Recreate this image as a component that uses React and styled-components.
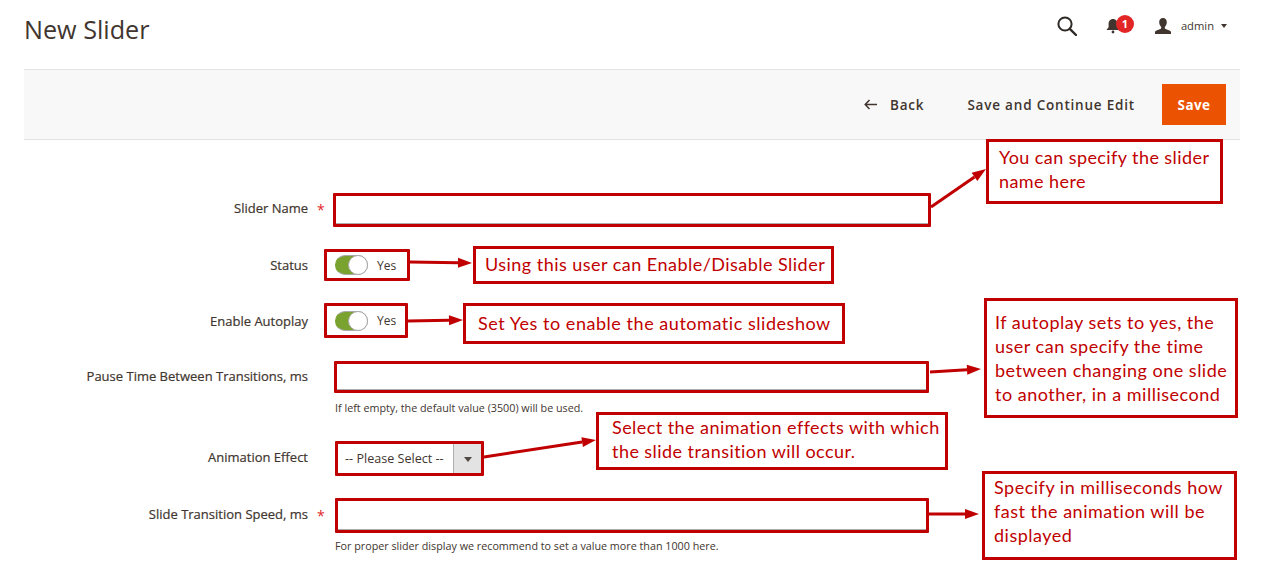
import React from "react";
import styled, { createGlobalStyle } from "styled-components";

const RED = "#c00000";

const Global = createGlobalStyle`
  html, body { margin: 0; padding: 0; background: #fff; }
  body { font-family: "Open Sans", "Liberation Sans", sans-serif; color: #41362f; }
  * { box-sizing: border-box; }
`;

const Page = styled.div`
  position: relative;
  width: 1265px;
  height: 578px;
  padding: 0 25px 0 24px;
  overflow: hidden;
`;

const Header = styled.header`
  height: 69px;
  display: flex;
  align-items: flex-start;
  justify-content: space-between;
`;

const Title = styled.h1`
  margin: 12px 0 0;
  font-size: 25.2px;
  line-height: 34px;
  font-weight: 400;
  color: #41362f;
`;

const HeaderTools = styled.div`
  display: flex;
  align-items: center;
  height: 52px;
  margin-right: 13px;
`;

const SearchButton = styled.span`
  display: flex;
  width: 20px;
  height: 20px;
  margin-right: 29px;
`;

const Bell = styled.span`
  position: relative;
  display: flex;
  width: 16px;
  height: 18px;
  margin-right: 32px;
`;

const Badge = styled.span`
  position: absolute;
  left: 10px;
  top: -2px;
  width: 18px;
  height: 18px;
  border-radius: 50%;
  background: #e22626;
  color: #fff;
  font-size: 11px;
  font-weight: 700;
  line-height: 18px;
  text-align: center;
`;

const UserName = styled.span`
  margin: 0 7px 0 9px;
  padding-bottom: 2px;
  font-size: 11.2px;
  color: #41362f;
`;

const Caret = styled.span`
  width: 0;
  height: 0;
  border-left: 3px solid transparent;
  border-right: 3px solid transparent;
  border-top: 4px solid #41362f;
`;

const ActionBar = styled.div`
  height: 71px;
  display: flex;
  align-items: center;
  justify-content: flex-end;
  padding-right: 14px;
  background: #f8f8f8;
  border-top: 1px solid #e3e3e3;
  border-bottom: 1px solid #e3e3e3;
`;

const ActionLink = styled.span`
  display: flex;
  align-items: center;
  gap: 13px;
  margin-right: ${(p) => p.$gap}px;
  font-size: 13.5px;
  font-weight: 600;
  letter-spacing: 0.8px;
  color: #41362f;
`;

const SaveButton = styled.button`
  width: 64px;
  height: 41px;
  border: 0;
  padding: 0;
  background: #eb5202;
  color: #fff;
  font-family: inherit;
  font-size: 13.5px;
  font-weight: 700;
  letter-spacing: 0.4px;
`;

const Form = styled.form`
  display: flex;
  flex-direction: column;
  padding-top: 53px;
`;

const Row = styled.div`
  display: grid;
  grid-template-columns: 284px 26px 1fr;
  align-items: center;
  margin-top: ${(p) => p.$top || 0}px;
  height: ${(p) => p.$height}px;
`;

const Label = styled.label`
  text-align: right;
  font-size: 13px;
  font-weight: 400;
  color: #41362f;
  padding-bottom: ${(p) => p.$lift || 0}px;
  -webkit-text-stroke: 0.2px #41362f;
`;

const Star = styled.span`
  color: #e22626;
  font-size: 14px;
  font-weight: 400;
  padding-left: 9px;
  line-height: 14px;
  height: 10px;
  margin-bottom: ${(p) => p.$lift || 0}px;
`;

const Control = styled.div`
  grid-column: 3;
  width: ${(p) => p.$width}px;
  height: ${(p) => p.$height}px;
  margin-left: ${(p) => p.$left}px;
  border: 3px solid ${RED};
  border-radius: 1px;
  background: #fff;
  display: flex;
  align-items: center;
`;

const Empty = styled.div`
  flex: 1;
  height: 100%;
  border-bottom: 1px solid #adadad;
`;

const Toggle = styled.span`
  position: relative;
  display: block;
  width: 33px;
  height: 20px;
  margin-left: 8px;
  border-radius: 10px;
  background: #79a22e;
  border: 1px solid #a9a9a9;
  border-left-color: #79a22e;
`;

const Knob = styled.span`
  position: absolute;
  right: -1px;
  top: -1px;
  width: 20px;
  height: 20px;
  border-radius: 50%;
  background: #fff;
  border: 1px solid #a9a9a9;
`;

const ToggleText = styled.span`
  margin-left: 9px;
  font-size: 12px;
  color: #41362f;
`;

const SelectText = styled.span`
  flex: 1;
  padding-left: 7px;
  font-size: 12.6px;
  color: #41362f;
  white-space: nowrap;
`;

const SelectArrow = styled.span`
  width: 28px;
  height: 100%;
  display: flex;
  align-items: center;
  justify-content: center;
  background: #e3e3e3;
  border-left: 1px solid #adadad;
  &::after {
    content: "";
    border-left: 4px solid transparent;
    border-right: 4px solid transparent;
    border-top: 5px solid #514943;
    margin-top: 2px;
  }
`;

const Note = styled.div`
  margin: ${(p) => p.$top}px 0 0 311px;
  font-size: 10.75px;
  line-height: 12px;
  color: #41362f;
`;

const Callout = styled.div`
  position: absolute;
  left: ${(p) => p.$x}px;
  top: ${(p) => p.$y}px;
  width: ${(p) => p.$w}px;
  height: ${(p) => p.$h}px;
  padding: ${(p) => p.$py}px 0 0 ${(p) => p.$px}px;
  border: 3px solid ${RED};
  background: #fff;
  color: ${RED};
  font-family: Lato, "Open Sans", sans-serif;
  font-size: 18px;
  font-weight: 400;
  line-height: 24px;
  letter-spacing: ${(p) => p.$ls}px;
  white-space: nowrap;
`;

const ArrowLayer = styled.svg`
  position: absolute;
  left: 0;
  top: 0;
  width: 1265px;
  height: 578px;
  pointer-events: none;
`;

const arrows = [
  [931, 207, 986, 169],
  [410, 262, 472, 263],
  [408, 321, 463, 320],
  [930, 372, 981, 369],
  [484, 457, 596, 440],
  [929, 514, 979, 514],
];

function Arrow({ from }) {
  const [x1, y1, x2, y2] = from;
  const dx = x2 - x1;
  const dy = y2 - y1;
  const len = Math.hypot(dx, dy);
  const ux = dx / len;
  const uy = dy / len;
  const bx = x2 - ux * 14;
  const by = y2 - uy * 14;
  const pts = `${x2},${y2} ${bx - uy * 5},${by + ux * 5} ${bx + uy * 5},${by - ux * 5}`;
  return (
    <g>
      <line x1={x1} y1={y1} x2={bx} y2={by} stroke={RED} strokeWidth="3" />
      <polygon points={pts} fill={RED} />
    </g>
  );
}

const callouts = [
  { x: 986, y: 139, w: 237, h: 65, px: 10, py: 3, ls: 0.42, text: "You can specify the slider\nname here" },
  { x: 473, y: 246, w: 361, h: 38, px: 9, py: 3, ls: 0.47, text: "Using this user can Enable/Disable Slider" },
  { x: 463, y: 303, w: 382, h: 41, px: 12, py: 5, ls: 0.54, text: "Set Yes to enable the automatic slideshow" },
  { x: 984, y: 298, w: 254, h: 120, px: 8, py: 9, ls: 0.5, text: "If autoplay sets to yes, the\nuser can specify the time\nbetween changing one slide\nto another, in a millisecond" },
  { x: 596, y: 412, w: 352, h: 58, px: 13, py: 0, ls: 0.44, text: "Select the animation effects with which\nthe slide transition will occur." },
  { x: 982, y: 471, w: 255, h: 89, px: 9, py: 1, ls: 0.5, text: "Specify in milliseconds how\nfast the animation will be\ndisplayed" },
];

function CalloutText({ text }) {
  return text.split("\n").map((line, i) => <div key={i}>{line}</div>);
}

export default function App() {
  return (
    <Page>
      <Global />
      <Header>
        <Title>New Slider</Title>
        <HeaderTools>
          <SearchButton>
            <svg width="20" height="20" viewBox="0 0 20 20" fill="none" stroke="#2f2a26" strokeWidth="2">
              <circle cx="8" cy="8" r="6.6" />
              <path d="M12.8 12.8 L19 19" strokeWidth="2.4" strokeLinecap="round" />
            </svg>
          </SearchButton>
          <Bell>
            <svg width="14" height="18" viewBox="0 0 14 18" fill="#41362f">
              <path d="M7 2c3 0 4.4 2.4 4.4 5v3.2L13.6 13H.4l2.2-2.8V7C2.600 4.400 4 2 7 2z" />
              <circle cx="7" cy="15" r="1.400" />
            </svg>
            <Badge>1</Badge>
          </Bell>
          <svg width="18" height="18" viewBox="0 0 18 18" fill="#41362f">
            <path d="M9 1c2.500 0 3.800 1.800 3.800 4.200 0 2-1 3.800-2 4.700v1.400c0 1 4.700 1.700 6.200 3.400V17H1v-2.300c1.500-1.700 6.200-2.400 6.200-3.400V9.900c-1-.9-2-2.700-2-4.700C5.200 2.800 6.500 1 9 1z" />
          </svg>
          <UserName>admin</UserName>
          <Caret />
        </HeaderTools>
      </Header>
      <ActionBar>
        <ActionLink $gap={43}>
          <svg width="13" height="11" viewBox="0 0 13 11" fill="none" stroke="#41362f" strokeWidth="1.500">
            <path d="M13 5.500H1.500M5.500 1 1.200 5.500 5.500 10" />
          </svg>
          Back
        </ActionLink>
        <ActionLink $gap={27}>Save and Continue Edit</ActionLink>
        <SaveButton type="button">Save</SaveButton>
      </ActionBar>
      <Form>
        <Row $height={34}>
          <Label $lift={4}>Slider Name</Label>
          <Star $lift={4}>*</Star>
          <Control $width={598} $height={34} $left={-1}><Empty /></Control>
        </Row>
        <Row $top={22} $height={32}>
          <Label>Status</Label>
          <Star />
          <Control $width={86} $height={32} $left={-10}>
            <Toggle><Knob /></Toggle>
            <ToggleText>Yes</ToggleText>
          </Control>
        </Row>
        <Row $top={22} $height={35}>
          <Label>Enable Autoplay</Label>
          <Star />
          <Control $width={84} $height={35} $left={-10}>
            <Toggle><Knob /></Toggle>
            <ToggleText>Yes</ToggleText>
          </Control>
        </Row>
        <Row $top={23} $height={32}>
          <Label $lift={2}>Pause Time Between Transitions, ms</Label>
          <Star />
          <Control $width={595} $height={32} $left={0}><Empty /></Control>
        </Row>
        <Note $top={9}>If left empty, the default value (3500) will be used.</Note>
        <Row $top={27} $height={35}>
          <Label $lift={3}>Animation Effect</Label>
          <Star />
          <Control $width={149} $height={35} $left={1}>
            <SelectText>-- Please Select --</SelectText>
            <SelectArrow />
          </Control>
        </Row>
        <Row $top={22} $height={35}>
          <Label $lift={4}>Slide Transition Speed, ms</Label>
          <Star $lift={4}>*</Star>
          <Control $width={594} $height={35} $left={1}><Empty /></Control>
        </Row>
        <Note $top={7}>For proper slider display we recommend to set a value more than 1000 here.</Note>
      </Form>
      <ArrowLayer viewBox="0 0 1265 578">
        {arrows.map((a, i) => <Arrow key={i} from={a} />)}
      </ArrowLayer>
      {callouts.map((c) => (
        <Callout key={c.x} $x={c.x} $y={c.y} $w={c.w} $h={c.h} $px={c.px} $py={c.py} $ls={c.ls}>
          <CalloutText text={c.text} />
        </Callout>
      ))}
    </Page>
  );
}
